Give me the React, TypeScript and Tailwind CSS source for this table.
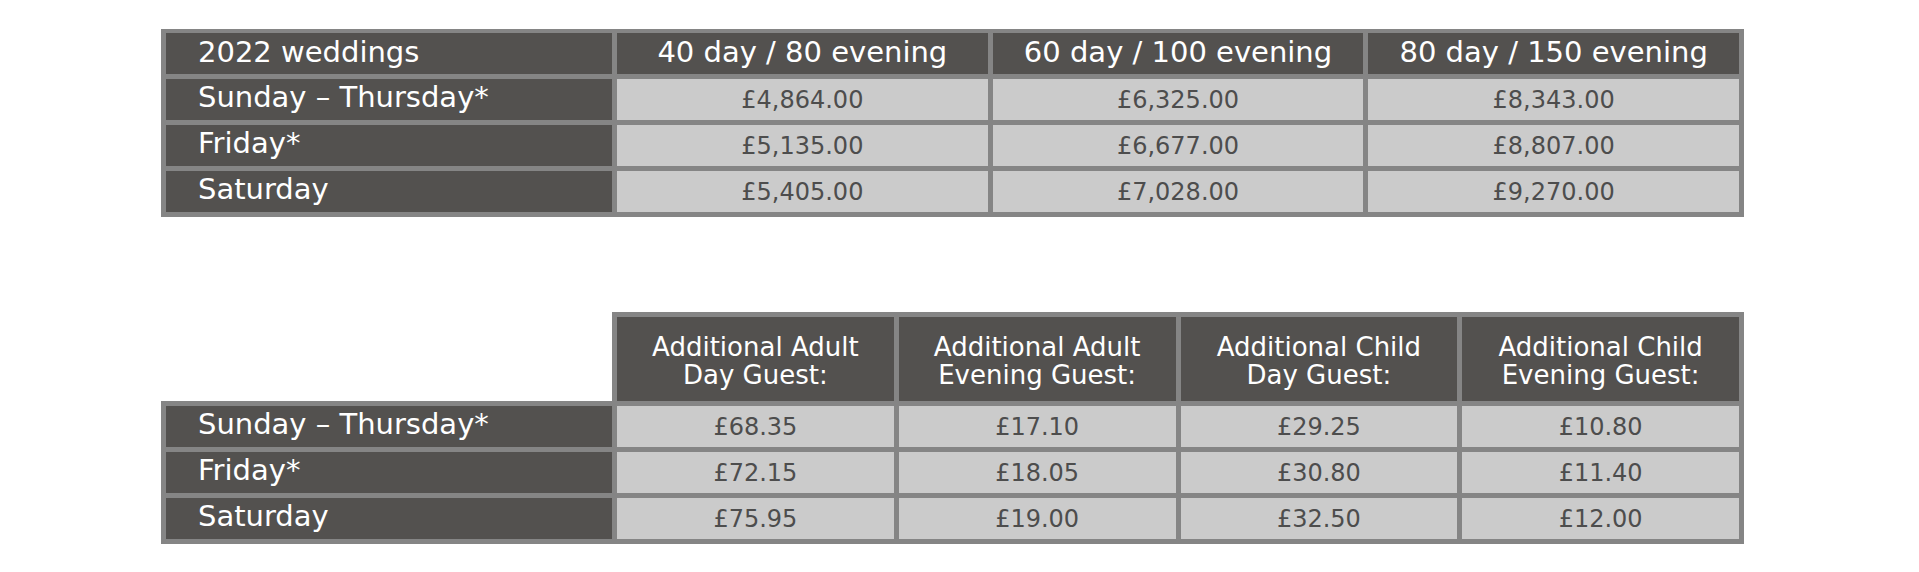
import React from 'react';

const font = { fontFamily: '"DejaVu Sans", "Liberation Sans", sans-serif' };

const days = ['Sunday – Thursday*', 'Friday*', 'Saturday'];

const packages = ['40 day / 80 evening', '60 day / 100 evening', '80 day / 150 evening'];
const packagePrices = [
  ['£4,864.00', '£6,325.00', '£8,343.00'],
  ['£5,135.00', '£6,677.00', '£8,807.00'],
  ['£5,405.00', '£7,028.00', '£9,270.00'],
];

const extras = [
  ['Additional Adult', 'Day Guest:'],
  ['Additional Adult', 'Evening Guest:'],
  ['Additional Child', 'Day Guest:'],
  ['Additional Child', 'Evening Guest:'],
];
const extraPrices = [
  ['£68.35', '£17.10', '£29.25', '£10.80'],
  ['£72.15', '£18.05', '£30.80', '£11.40'],
  ['£75.95', '£19.00', '£32.50', '£12.00'],
];

function Label({ children }: { children: React.ReactNode }) {
  return (
    <div className="h-[41px] bg-[#53514f] text-white text-[29px] leading-none flex items-center pl-[32px] pb-[4px] whitespace-nowrap">
      {children}
    </div>
  );
}

function Price({ children }: { children: React.ReactNode }) {
  return (
    <div className="h-[41px] bg-[#cbcbcb] text-[#4d4d4d] text-[24px] leading-none flex items-center justify-center">
      {children}
    </div>
  );
}

export default function App() {
  return (
    <div className="w-[1919px] h-[572px] bg-white overflow-hidden" style={font}>
      {/* 2022 package prices */}
      <div className="mt-[29px] ml-[161px] w-[1583px] bg-[#858585] p-[5px] pt-[4px]">
        <div className="grid grid-cols-[446px_1fr_1fr_1fr] gap-x-[5px] gap-y-[5px]">
          <div className="h-[41px] bg-[#53514f] text-white text-[29px] leading-none flex items-center pl-[32px] pb-[2px]">
            2022 weddings
          </div>
          {packages.map((p) => (
            <div
              key={p}
              className="h-[41px] bg-[#53514f] text-white text-[29px] leading-none flex items-center justify-center pb-[2px] whitespace-nowrap"
            >
              {p}
            </div>
          ))}
          {days.map((d, i) => (
            <React.Fragment key={d}>
              <Label>{d}</Label>
              {packagePrices[i].map((v) => (
                <Price key={v}>{v}</Price>
              ))}
            </React.Fragment>
          ))}
        </div>
      </div>

      {/* Additional guests */}
      <div className="mt-[95px] ml-[161px] w-[1583px]">
        <div className="flex">
          <div className="w-[451px] shrink-0" />
          <div className="flex-1 bg-[#858585] px-[5px] pt-[5px]">
            <div className="grid grid-cols-4 gap-x-[5px]">
              {extras.map(([a, b], i) => (
                <div
                  key={i}
                  className="h-[84px] bg-[#53514f] text-white text-[26px] leading-[28px] flex flex-col items-center justify-center pt-[4px] whitespace-nowrap"
                >
                  <span>{a}</span>
                  <span>{b}</span>
                </div>
              ))}
            </div>
          </div>
        </div>
        <div className="bg-[#858585] p-[5px]">
          <div className="grid grid-cols-[446px_1fr_1fr_1fr_1fr] gap-x-[5px] gap-y-[5px]">
            {days.map((d, i) => (
              <React.Fragment key={d}>
                <Label>{d}</Label>
                {extraPrices[i].map((v) => (
                  <Price key={v}>{v}</Price>
                ))}
              </React.Fragment>
            ))}
          </div>
        </div>
      </div>
    </div>
  );
}
